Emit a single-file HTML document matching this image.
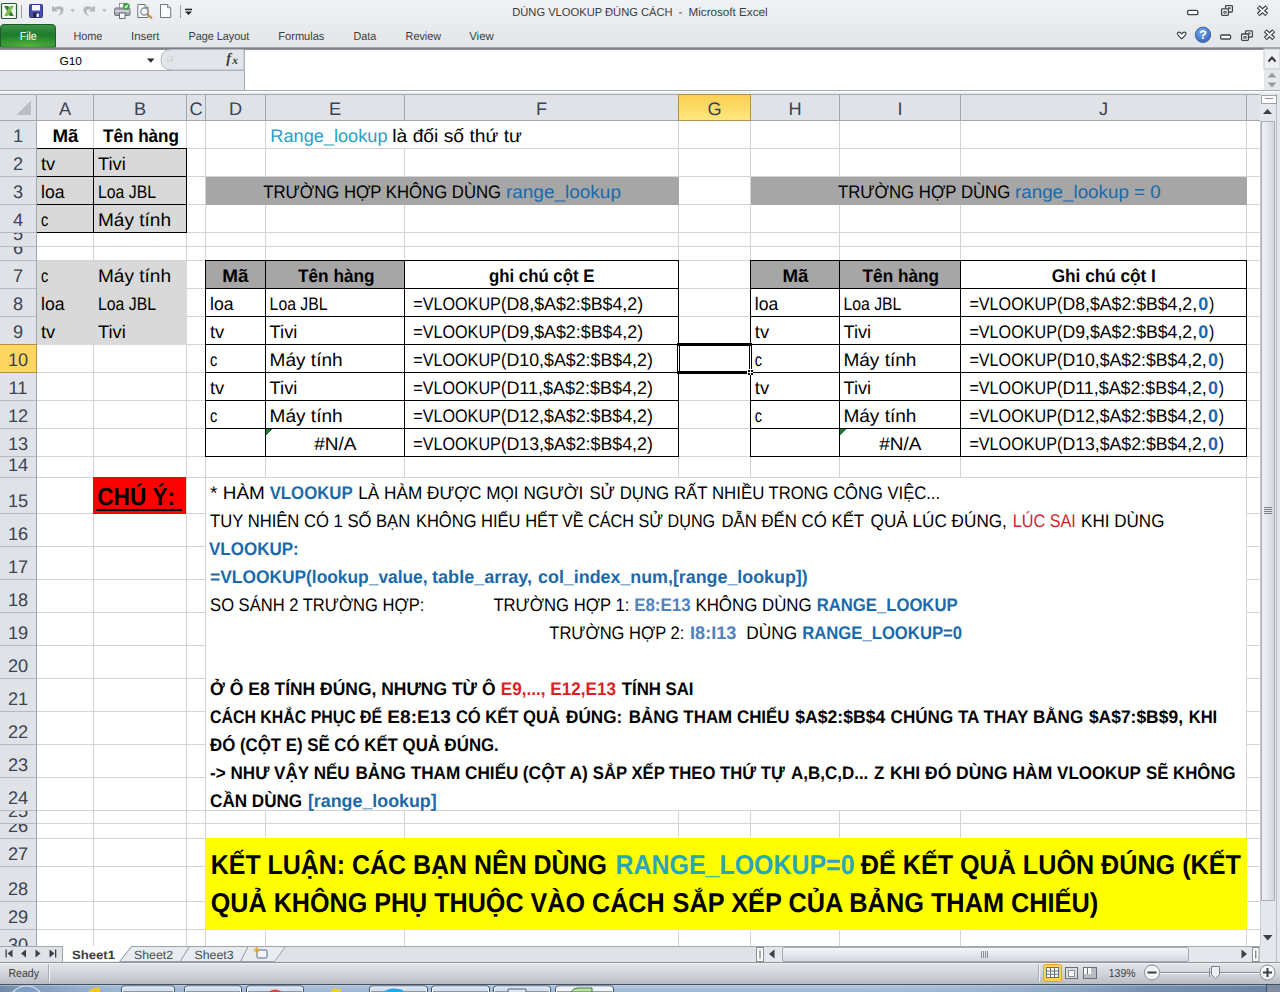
<!DOCTYPE html>
<html lang="vi">
<head>
<meta charset="utf-8">
<title>DÙNG VLOOKUP ĐÚNG CÁCH - Microsoft Excel</title>
<style>
html,body{margin:0;padding:0;background:#fff;}
body{width:1280px;height:992px;overflow:hidden;font-family:'Liberation Sans', sans-serif;}
svg{display:block;}
</style>
</head>
<body>
<svg width="1280" height="992" viewBox="0 0 1280 992" font-family="'Liberation Sans', sans-serif" text-rendering="geometricPrecision">
<defs>
<linearGradient id="gTitle" x1="0" y1="0" x2="0" y2="1"><stop offset="0" stop-color="#f1f2f4"/><stop offset="0.5" stop-color="#e9ebee"/><stop offset="1" stop-color="#e3e6ea"/></linearGradient>
<linearGradient id="gFile" x1="0" y1="0" x2="0" y2="1"><stop offset="0" stop-color="#3c9447"/><stop offset="0.45" stop-color="#1f7a2d"/><stop offset="1" stop-color="#3fa531"/></linearGradient>
<linearGradient id="gSelCol" x1="0" y1="0" x2="0" y2="1"><stop offset="0" stop-color="#fdd050"/><stop offset="1" stop-color="#ffe680"/></linearGradient>
<linearGradient id="gStatus" x1="0" y1="0" x2="0" y2="1"><stop offset="0" stop-color="#e4e6ea"/><stop offset="0.5" stop-color="#d3d6db"/><stop offset="1" stop-color="#b9bcc2"/></linearGradient>
<linearGradient id="gTask" x1="0" y1="0" x2="0" y2="1"><stop offset="0" stop-color="#b4c8e0"/><stop offset="1" stop-color="#9fb8d6"/></linearGradient>
<linearGradient id="gTaskX" x1="0" y1="0" x2="1" y2="0"><stop offset="0" stop-color="#5d7897" stop-opacity="0.75"/><stop offset="0.09" stop-color="#8aa5c6" stop-opacity="0.3"/><stop offset="0.5" stop-color="#a8c0dc" stop-opacity="0"/><stop offset="0.66" stop-color="#a8c0dc" stop-opacity="0"/><stop offset="0.9" stop-color="#66809f" stop-opacity="0.75"/><stop offset="1" stop-color="#5f7896" stop-opacity="0.85"/></linearGradient>
<linearGradient id="gThumbV" x1="0" y1="0" x2="1" y2="0"><stop offset="0" stop-color="#f3f4f7"/><stop offset="0.5" stop-color="#e3e6eb"/><stop offset="1" stop-color="#d2d6dd"/></linearGradient>
<linearGradient id="gThumbH" x1="0" y1="0" x2="0" y2="1"><stop offset="0" stop-color="#f5f6f8"/><stop offset="0.5" stop-color="#e4e7ec"/><stop offset="1" stop-color="#d3d7de"/></linearGradient>
<radialGradient id="gHelp" cx="0.4" cy="0.3" r="0.8"><stop offset="0" stop-color="#7fa8e6"/><stop offset="1" stop-color="#2f62b8"/></radialGradient>
<radialGradient id="gFileGlow" cx="0.5" cy="1.1" r="0.75"><stop offset="0" stop-color="#69c63c" stop-opacity="0.95"/><stop offset="1" stop-color="#2c8a33" stop-opacity="0"/></radialGradient>
</defs>
<g id="titlebar" shape-rendering="crispEdges">
<rect x="0" y="0" width="1280" height="47" fill="url(#gTitle)" />
<rect x="0" y="47" width="1280" height="1" fill="#a3a7ae" />
<rect x="0" y="48" width="1280" height="1" fill="#7b8089" />
<rect x="0" y="49" width="1280" height="1" fill="#8d9199" />
</g>
<g id="titletext">
<text x="512.2" y="16" font-size="11.6" fill="#3a3d42" textLength="160.5" lengthAdjust="spacingAndGlyphs">DÙNG VLOOKUP ĐÚNG CÁCH</text>
<text x="678.6" y="16" font-size="11.6" fill="#3a3d42">-</text>
<text x="688.5" y="16" font-size="11.6" fill="#3a3d42" textLength="79.1" lengthAdjust="spacingAndGlyphs">Microsoft Excel</text>
</g>
<g id="filetab">
<path d="M0.5 47 V28 Q0.5 24.5 4 24.5 H52 Q55.5 24.5 55.5 28 V47 Z" fill="url(#gFile)" stroke="#1d5b29" stroke-width="1"/>
<path d="M1.5 47 V28.5 Q1.5 25.5 4.5 25.5 H51.5 Q54.5 25.5 54.5 28.5 V47 Z" fill="url(#gFileGlow)"/>
<text x="19.7" y="40" font-size="11.6" fill="#ffffff" textLength="17" lengthAdjust="spacingAndGlyphs">File</text>
</g>
<g id="ribbontabs" fill="#3a3d42">
<text x="73.4" y="40" font-size="11.6" fill="#3a3d42" textLength="29.0" lengthAdjust="spacingAndGlyphs">Home</text>
<text x="131" y="40" font-size="11.6" fill="#3a3d42" textLength="28.4" lengthAdjust="spacingAndGlyphs">Insert</text>
<text x="188.4" y="40" font-size="11.6" fill="#3a3d42" textLength="61.0" lengthAdjust="spacingAndGlyphs">Page Layout</text>
<text x="278.3" y="40" font-size="11.6" fill="#3a3d42" textLength="46.1" lengthAdjust="spacingAndGlyphs">Formulas</text>
<text x="353.6" y="40" font-size="11.6" fill="#3a3d42" textLength="22.7" lengthAdjust="spacingAndGlyphs">Data</text>
<text x="405.6" y="40" font-size="11.6" fill="#3a3d42" textLength="35.4" lengthAdjust="spacingAndGlyphs">Review</text>
<text x="469.2" y="40" font-size="11.6" fill="#3a3d42" textLength="24.6" lengthAdjust="spacingAndGlyphs">View</text>
</g>
<g id="formulabar" shape-rendering="crispEdges">
<rect x="0" y="50" width="1280" height="40" fill="#ffffff" />
<rect x="0" y="71" width="244" height="19" fill="#e2e5ea" />
<rect x="0" y="70" width="244" height="1" fill="#a9adb5" />
<rect x="244" y="50" width="1" height="40" fill="#a9adb5" />
<rect x="0" y="90" width="1280" height="1" fill="#a3a8b0" />
<rect x="0" y="91" width="1280" height="1" fill="#ffffff" />
<rect x="0" y="92" width="1280" height="2" fill="#eceef1" />
</g>
<path d="M244 49.5 H172 Q161 49.5 161 60 Q161 70 172 70 H244 Z" fill="#e2e5ea" stroke="#b4b8bf" stroke-width="1"/>
<circle cx="170" cy="59" r="3.3" fill="#d2d5da"/>
<circle cx="169.3" cy="58.2" r="1.6" fill="#e9ebee"/>
<text x="59.4" y="64.5" font-size="11.4" fill="#000" textLength="22.6" lengthAdjust="spacingAndGlyphs">G10</text>
<path d="M147 58.5 h7.5 l-3.75 4.2 z" fill="#2b2b2b"/>
<text x="226.3" y="63.2" font-size="14.5" fill="#3a3d42" font-weight="bold" font-family="'Liberation Serif', serif" style="font-style:italic">f</text>
<text x="232.2" y="64.2" font-size="11.5" fill="#3a3d42" font-weight="bold" font-family="'Liberation Serif', serif" style="font-style:italic">x</text>
<g id="fbscroll">
<rect x="1264" y="49" width="16" height="41" fill="#e6e8ec" />
<rect x="1264" y="49" width="16" height="20" fill="#eff0f3" stroke="#c5c8ce" stroke-width="1"/>
<path d="M1268.5 61.5 l3.5 -4 l3.5 4" fill="none" stroke="#333" stroke-width="2"/>
<path d="M1267.5 77.5 h9 l-4.5 -5 z" fill="#9a9da3"/>
<path d="M1267.5 82.5 h9 l-4.5 5 z" fill="#9a9da3"/>
</g>
<g id="grid" shape-rendering="crispEdges">
<rect x="0" y="94" width="1260" height="852" fill="#ffffff" />
<rect x="37" y="148" width="1223" height="1" fill="#d4d4d4" />
<rect x="37" y="176" width="1223" height="1" fill="#d4d4d4" />
<rect x="37" y="204" width="1223" height="1" fill="#d4d4d4" />
<rect x="37" y="232" width="1223" height="1" fill="#d4d4d4" />
<rect x="37" y="246" width="1223" height="1" fill="#d4d4d4" />
<rect x="37" y="260" width="1223" height="1" fill="#d4d4d4" />
<rect x="37" y="288" width="1223" height="1" fill="#d4d4d4" />
<rect x="37" y="316" width="1223" height="1" fill="#d4d4d4" />
<rect x="37" y="344" width="1223" height="1" fill="#d4d4d4" />
<rect x="37" y="372" width="1223" height="1" fill="#d4d4d4" />
<rect x="37" y="400" width="1223" height="1" fill="#d4d4d4" />
<rect x="37" y="428" width="1223" height="1" fill="#d4d4d4" />
<rect x="37" y="456" width="1223" height="1" fill="#d4d4d4" />
<rect x="37" y="477" width="1223" height="1" fill="#d4d4d4" />
<rect x="37" y="513" width="1223" height="1" fill="#d4d4d4" />
<rect x="37" y="546" width="1223" height="1" fill="#d4d4d4" />
<rect x="37" y="579" width="1223" height="1" fill="#d4d4d4" />
<rect x="37" y="612" width="1223" height="1" fill="#d4d4d4" />
<rect x="37" y="645" width="1223" height="1" fill="#d4d4d4" />
<rect x="37" y="678" width="1223" height="1" fill="#d4d4d4" />
<rect x="37" y="711" width="1223" height="1" fill="#d4d4d4" />
<rect x="37" y="744" width="1223" height="1" fill="#d4d4d4" />
<rect x="37" y="777" width="1223" height="1" fill="#d4d4d4" />
<rect x="37" y="810" width="1223" height="1" fill="#d4d4d4" />
<rect x="37" y="823" width="1223" height="1" fill="#d4d4d4" />
<rect x="37" y="838" width="1223" height="1" fill="#d4d4d4" />
<rect x="37" y="866" width="1223" height="1" fill="#d4d4d4" />
<rect x="37" y="901" width="1223" height="1" fill="#d4d4d4" />
<rect x="37" y="929" width="1223" height="1" fill="#d4d4d4" />
<rect x="93" y="121" width="1" height="825" fill="#d4d4d4" />
<rect x="186" y="121" width="1" height="825" fill="#d4d4d4" />
<rect x="205" y="121" width="1" height="825" fill="#d4d4d4" />
<rect x="265" y="121" width="1" height="825" fill="#d4d4d4" />
<rect x="404" y="121" width="1" height="825" fill="#d4d4d4" />
<rect x="678" y="121" width="1" height="825" fill="#d4d4d4" />
<rect x="750" y="121" width="1" height="825" fill="#d4d4d4" />
<rect x="839" y="121" width="1" height="825" fill="#d4d4d4" />
<rect x="960" y="121" width="1" height="825" fill="#d4d4d4" />
<rect x="1246" y="121" width="1" height="825" fill="#d4d4d4" />
<rect x="37" y="149" width="150" height="84" fill="#d9d9d9" />
<rect x="37" y="261" width="150" height="84" fill="#d9d9d9" />
<rect x="206" y="177" width="473" height="28" fill="#a6a6a6" />
<rect x="751" y="177" width="496" height="28" fill="#a6a6a6" />
<rect x="404" y="121" width="1" height="27" fill="#ffffff" />
<rect x="206" y="261" width="199" height="28" fill="#a6a6a6" />
<rect x="751" y="261" width="210" height="28" fill="#a6a6a6" />
<rect x="206" y="478" width="1040" height="332" fill="#ffffff" />
<rect x="205" y="838" width="1042" height="92" fill="#ffff00" />
<rect x="93" y="477" width="93" height="37" fill="#ff0000" />
<rect x="37" y="148" width="150" height="1" fill="#000000" />
<rect x="37" y="176" width="150" height="1" fill="#000000" />
<rect x="37" y="204" width="150" height="1" fill="#000000" />
<rect x="37" y="232" width="150" height="1" fill="#000000" />
<rect x="93" y="148" width="1" height="85" fill="#000000" />
<rect x="186" y="148" width="1" height="85" fill="#000000" />
<rect x="205" y="260" width="474" height="1" fill="#000000" />
<rect x="205" y="288" width="474" height="1" fill="#000000" />
<rect x="205" y="316" width="474" height="1" fill="#000000" />
<rect x="205" y="344" width="474" height="1" fill="#000000" />
<rect x="205" y="372" width="474" height="1" fill="#000000" />
<rect x="205" y="400" width="474" height="1" fill="#000000" />
<rect x="205" y="428" width="474" height="1" fill="#000000" />
<rect x="205" y="456" width="474" height="1" fill="#000000" />
<rect x="205" y="260" width="1" height="197" fill="#000000" />
<rect x="265" y="260" width="1" height="197" fill="#000000" />
<rect x="404" y="260" width="1" height="197" fill="#000000" />
<rect x="678" y="260" width="1" height="197" fill="#000000" />
<rect x="750" y="260" width="497" height="1" fill="#000000" />
<rect x="750" y="288" width="497" height="1" fill="#000000" />
<rect x="750" y="316" width="497" height="1" fill="#000000" />
<rect x="750" y="344" width="497" height="1" fill="#000000" />
<rect x="750" y="372" width="497" height="1" fill="#000000" />
<rect x="750" y="400" width="497" height="1" fill="#000000" />
<rect x="750" y="428" width="497" height="1" fill="#000000" />
<rect x="750" y="456" width="497" height="1" fill="#000000" />
<rect x="750" y="260" width="1" height="197" fill="#000000" />
<rect x="839" y="260" width="1" height="197" fill="#000000" />
<rect x="960" y="260" width="1" height="197" fill="#000000" />
<rect x="1246" y="260" width="1" height="197" fill="#000000" />
<path d="M266 429 h6 l-6 6 z" fill="#1e7a3c"/>
<path d="M840 429 h6 l-6 6 z" fill="#1e7a3c"/>
<path d="M677 343 H752 V374 H677 Z M680 346 V371 H749 V346 Z" fill="#000" fill-rule="evenodd"/>
<rect x="678" y="346" width="1" height="25" fill="#ffffff" />
<rect x="750" y="346" width="1" height="23" fill="#ffffff" />
<rect x="747" y="369" width="6" height="6" fill="#ffffff" />
<rect x="748" y="370" width="5" height="5" fill="#000000" />
<rect x="750" y="370" width="1" height="5" fill="#ffffff" />
<rect x="748" y="372" width="5" height="1" fill="#ffffff" />
<rect x="0" y="94" width="1260" height="27" fill="#dfe3e8" />
<rect x="0" y="94" width="1260" height="1" fill="#a3a8b0" />
<rect x="0" y="120" width="1260" height="1" fill="#a3a8b0" />
<rect x="679" y="95" width="71" height="25" fill="url(#gSelCol)" />
<rect x="36" y="95" width="1" height="26" fill="#a3a8b0" />
<rect x="93" y="95" width="1" height="26" fill="#a3a8b0" />
<rect x="186" y="95" width="1" height="26" fill="#a3a8b0" />
<rect x="205" y="95" width="1" height="26" fill="#a3a8b0" />
<rect x="265" y="95" width="1" height="26" fill="#a3a8b0" />
<rect x="404" y="95" width="1" height="26" fill="#a3a8b0" />
<rect x="678" y="95" width="1" height="26" fill="#a3a8b0" />
<rect x="750" y="95" width="1" height="26" fill="#a3a8b0" />
<rect x="839" y="95" width="1" height="26" fill="#a3a8b0" />
<rect x="960" y="95" width="1" height="26" fill="#a3a8b0" />
<rect x="1246" y="95" width="1" height="26" fill="#a3a8b0" />
<rect x="678" y="120" width="73" height="1" fill="#b39241" />
<rect x="678" y="94" width="73" height="1" fill="#b39241" />
<rect x="678" y="94" width="1" height="27" fill="#b39241" />
<rect x="750" y="94" width="1" height="27" fill="#b39241" />
<path d="M31 100 V115 H16 Z" fill="#b9bdc4"/>
<rect x="0" y="121" width="36" height="825" fill="#dfe3e8" />
<rect x="36" y="121" width="1" height="825" fill="#a3a8b0" />
<rect x="0" y="148" width="36" height="1" fill="#b4b8bf" />
<rect x="0" y="176" width="36" height="1" fill="#b4b8bf" />
<rect x="0" y="204" width="36" height="1" fill="#b4b8bf" />
<rect x="0" y="232" width="36" height="1" fill="#b4b8bf" />
<rect x="0" y="246" width="36" height="1" fill="#b4b8bf" />
<rect x="0" y="260" width="36" height="1" fill="#b4b8bf" />
<rect x="0" y="288" width="36" height="1" fill="#b4b8bf" />
<rect x="0" y="316" width="36" height="1" fill="#b4b8bf" />
<rect x="0" y="344" width="36" height="1" fill="#b4b8bf" />
<rect x="0" y="372" width="36" height="1" fill="#b4b8bf" />
<rect x="0" y="400" width="36" height="1" fill="#b4b8bf" />
<rect x="0" y="428" width="36" height="1" fill="#b4b8bf" />
<rect x="0" y="456" width="36" height="1" fill="#b4b8bf" />
<rect x="0" y="477" width="36" height="1" fill="#b4b8bf" />
<rect x="0" y="513" width="36" height="1" fill="#b4b8bf" />
<rect x="0" y="546" width="36" height="1" fill="#b4b8bf" />
<rect x="0" y="579" width="36" height="1" fill="#b4b8bf" />
<rect x="0" y="612" width="36" height="1" fill="#b4b8bf" />
<rect x="0" y="645" width="36" height="1" fill="#b4b8bf" />
<rect x="0" y="678" width="36" height="1" fill="#b4b8bf" />
<rect x="0" y="711" width="36" height="1" fill="#b4b8bf" />
<rect x="0" y="744" width="36" height="1" fill="#b4b8bf" />
<rect x="0" y="777" width="36" height="1" fill="#b4b8bf" />
<rect x="0" y="810" width="36" height="1" fill="#b4b8bf" />
<rect x="0" y="823" width="36" height="1" fill="#b4b8bf" />
<rect x="0" y="838" width="36" height="1" fill="#b4b8bf" />
<rect x="0" y="866" width="36" height="1" fill="#b4b8bf" />
<rect x="0" y="901" width="36" height="1" fill="#b4b8bf" />
<rect x="0" y="929" width="36" height="1" fill="#b4b8bf" />
<rect x="0" y="345" width="36" height="27" fill="#ffd65f" />
<rect x="0" y="372" width="37" height="1" fill="#b39241" />
<rect x="0" y="344" width="37" height="1" fill="#b39241" />
<rect x="36" y="344" width="1" height="29" fill="#b39241" />
</g>
<g id="hdrtext">
<text x="65.0" y="114.5" font-size="18.2" fill="#3c4250" text-anchor="middle">A</text>
<text x="140.0" y="114.5" font-size="18.2" fill="#3c4250" text-anchor="middle">B</text>
<text x="196.0" y="114.5" font-size="18.2" fill="#3c4250" text-anchor="middle">C</text>
<text x="235.5" y="114.5" font-size="18.2" fill="#3c4250" text-anchor="middle">D</text>
<text x="335.0" y="114.5" font-size="18.2" fill="#3c4250" text-anchor="middle">E</text>
<text x="541.5" y="114.5" font-size="18.2" fill="#3c4250" text-anchor="middle">F</text>
<text x="714.5" y="114.5" font-size="18.2" fill="#3c4250" text-anchor="middle">G</text>
<text x="795.0" y="114.5" font-size="18.2" fill="#3c4250" text-anchor="middle">H</text>
<text x="900.0" y="114.5" font-size="18.2" fill="#3c4250" text-anchor="middle">I</text>
<text x="1103.5" y="114.5" font-size="18.2" fill="#3c4250" text-anchor="middle">J</text>
<clipPath id="rc1"><rect x="0" y="121" width="36" height="27"/></clipPath>
<g clip-path="url(#rc1)">
<text x="18" y="141.5" font-size="18.2" fill="#3c4250" text-anchor="middle">1</text>
</g>
<clipPath id="rc2"><rect x="0" y="149" width="36" height="27"/></clipPath>
<g clip-path="url(#rc2)">
<text x="18" y="169.5" font-size="18.2" fill="#3c4250" text-anchor="middle">2</text>
</g>
<clipPath id="rc3"><rect x="0" y="177" width="36" height="27"/></clipPath>
<g clip-path="url(#rc3)">
<text x="18" y="197.5" font-size="18.2" fill="#3c4250" text-anchor="middle">3</text>
</g>
<clipPath id="rc4"><rect x="0" y="205" width="36" height="27"/></clipPath>
<g clip-path="url(#rc4)">
<text x="18" y="225.5" font-size="18.2" fill="#3c4250" text-anchor="middle">4</text>
</g>
<clipPath id="rc5"><rect x="0" y="233" width="36" height="13"/></clipPath>
<g clip-path="url(#rc5)">
<text x="18" y="239.5" font-size="18.2" fill="#3c4250" text-anchor="middle">5</text>
</g>
<clipPath id="rc6"><rect x="0" y="247" width="36" height="13"/></clipPath>
<g clip-path="url(#rc6)">
<text x="18" y="253.5" font-size="18.2" fill="#3c4250" text-anchor="middle">6</text>
</g>
<clipPath id="rc7"><rect x="0" y="261" width="36" height="27"/></clipPath>
<g clip-path="url(#rc7)">
<text x="18" y="281.5" font-size="18.2" fill="#3c4250" text-anchor="middle">7</text>
</g>
<clipPath id="rc8"><rect x="0" y="289" width="36" height="27"/></clipPath>
<g clip-path="url(#rc8)">
<text x="18" y="309.5" font-size="18.2" fill="#3c4250" text-anchor="middle">8</text>
</g>
<clipPath id="rc9"><rect x="0" y="317" width="36" height="27"/></clipPath>
<g clip-path="url(#rc9)">
<text x="18" y="337.5" font-size="18.2" fill="#3c4250" text-anchor="middle">9</text>
</g>
<clipPath id="rc10"><rect x="0" y="345" width="36" height="27"/></clipPath>
<g clip-path="url(#rc10)">
<text x="18" y="365.5" font-size="18.2" fill="#3c4250" text-anchor="middle">10</text>
</g>
<clipPath id="rc11"><rect x="0" y="373" width="36" height="27"/></clipPath>
<g clip-path="url(#rc11)">
<text x="18" y="393.5" font-size="18.2" fill="#3c4250" text-anchor="middle">11</text>
</g>
<clipPath id="rc12"><rect x="0" y="401" width="36" height="27"/></clipPath>
<g clip-path="url(#rc12)">
<text x="18" y="421.5" font-size="18.2" fill="#3c4250" text-anchor="middle">12</text>
</g>
<clipPath id="rc13"><rect x="0" y="429" width="36" height="27"/></clipPath>
<g clip-path="url(#rc13)">
<text x="18" y="449.5" font-size="18.2" fill="#3c4250" text-anchor="middle">13</text>
</g>
<clipPath id="rc14"><rect x="0" y="457" width="36" height="20"/></clipPath>
<g clip-path="url(#rc14)">
<text x="18" y="470.5" font-size="18.2" fill="#3c4250" text-anchor="middle">14</text>
</g>
<clipPath id="rc15"><rect x="0" y="478" width="36" height="35"/></clipPath>
<g clip-path="url(#rc15)">
<text x="18" y="506.5" font-size="18.2" fill="#3c4250" text-anchor="middle">15</text>
</g>
<clipPath id="rc16"><rect x="0" y="514" width="36" height="32"/></clipPath>
<g clip-path="url(#rc16)">
<text x="18" y="539.5" font-size="18.2" fill="#3c4250" text-anchor="middle">16</text>
</g>
<clipPath id="rc17"><rect x="0" y="547" width="36" height="32"/></clipPath>
<g clip-path="url(#rc17)">
<text x="18" y="572.5" font-size="18.2" fill="#3c4250" text-anchor="middle">17</text>
</g>
<clipPath id="rc18"><rect x="0" y="580" width="36" height="32"/></clipPath>
<g clip-path="url(#rc18)">
<text x="18" y="605.5" font-size="18.2" fill="#3c4250" text-anchor="middle">18</text>
</g>
<clipPath id="rc19"><rect x="0" y="613" width="36" height="32"/></clipPath>
<g clip-path="url(#rc19)">
<text x="18" y="638.5" font-size="18.2" fill="#3c4250" text-anchor="middle">19</text>
</g>
<clipPath id="rc20"><rect x="0" y="646" width="36" height="32"/></clipPath>
<g clip-path="url(#rc20)">
<text x="18" y="671.5" font-size="18.2" fill="#3c4250" text-anchor="middle">20</text>
</g>
<clipPath id="rc21"><rect x="0" y="679" width="36" height="32"/></clipPath>
<g clip-path="url(#rc21)">
<text x="18" y="704.5" font-size="18.2" fill="#3c4250" text-anchor="middle">21</text>
</g>
<clipPath id="rc22"><rect x="0" y="712" width="36" height="32"/></clipPath>
<g clip-path="url(#rc22)">
<text x="18" y="737.5" font-size="18.2" fill="#3c4250" text-anchor="middle">22</text>
</g>
<clipPath id="rc23"><rect x="0" y="745" width="36" height="32"/></clipPath>
<g clip-path="url(#rc23)">
<text x="18" y="770.5" font-size="18.2" fill="#3c4250" text-anchor="middle">23</text>
</g>
<clipPath id="rc24"><rect x="0" y="778" width="36" height="32"/></clipPath>
<g clip-path="url(#rc24)">
<text x="18" y="803.5" font-size="18.2" fill="#3c4250" text-anchor="middle">24</text>
</g>
<clipPath id="rc25"><rect x="0" y="811" width="36" height="12"/></clipPath>
<g clip-path="url(#rc25)">
<text x="18" y="816.5" font-size="18.2" fill="#3c4250" text-anchor="middle">25</text>
</g>
<clipPath id="rc26"><rect x="0" y="824" width="36" height="14"/></clipPath>
<g clip-path="url(#rc26)">
<text x="18" y="831.5" font-size="18.2" fill="#3c4250" text-anchor="middle">26</text>
</g>
<clipPath id="rc27"><rect x="0" y="839" width="36" height="27"/></clipPath>
<g clip-path="url(#rc27)">
<text x="18" y="859.5" font-size="18.2" fill="#3c4250" text-anchor="middle">27</text>
</g>
<clipPath id="rc28"><rect x="0" y="867" width="36" height="34"/></clipPath>
<g clip-path="url(#rc28)">
<text x="18" y="894.5" font-size="18.2" fill="#3c4250" text-anchor="middle">28</text>
</g>
<clipPath id="rc29"><rect x="0" y="902" width="36" height="27"/></clipPath>
<g clip-path="url(#rc29)">
<text x="18" y="922.5" font-size="18.2" fill="#3c4250" text-anchor="middle">29</text>
</g>
<clipPath id="rc30"><rect x="0" y="930" width="36" height="16"/></clipPath>
<g clip-path="url(#rc30)">
<text x="18" y="950.5" font-size="18.2" fill="#3c4250" text-anchor="middle">30</text>
</g>
</g>
<g id="celltext">
<text x="52.5" y="141.5" font-size="18.2" fill="#000" font-weight="bold" textLength="26" lengthAdjust="spacingAndGlyphs">Mã</text>
<text x="103" y="141.5" font-size="18.2" fill="#000" font-weight="bold" textLength="76" lengthAdjust="spacingAndGlyphs">Tên hàng</text>
<text x="41" y="169.5" font-size="18.2" fill="#000" textLength="14.3" lengthAdjust="spacingAndGlyphs">tv</text>
<text x="98" y="169.5" font-size="18.2" fill="#000" textLength="27.8" lengthAdjust="spacingAndGlyphs">Tivi</text>
<text x="41" y="197.5" font-size="18.2" fill="#000" textLength="23.5" lengthAdjust="spacingAndGlyphs">loa</text>
<text x="98" y="197.5" font-size="18.2" fill="#000" textLength="58" lengthAdjust="spacingAndGlyphs">Loa JBL</text>
<text x="41" y="225.5" font-size="18.2" fill="#000" textLength="7.3" lengthAdjust="spacingAndGlyphs">c</text>
<text x="98" y="225.5" font-size="18.2" fill="#000" textLength="73" lengthAdjust="spacingAndGlyphs">Máy tính</text>
<text x="41" y="281.5" font-size="18.2" fill="#000" textLength="7.3" lengthAdjust="spacingAndGlyphs">c</text>
<text x="98" y="281.5" font-size="18.2" fill="#000" textLength="73" lengthAdjust="spacingAndGlyphs">Máy tính</text>
<text x="41" y="309.5" font-size="18.2" fill="#000" textLength="23.5" lengthAdjust="spacingAndGlyphs">loa</text>
<text x="98" y="309.5" font-size="18.2" fill="#000" textLength="58" lengthAdjust="spacingAndGlyphs">Loa JBL</text>
<text x="41" y="337.5" font-size="18.2" fill="#000" textLength="14.3" lengthAdjust="spacingAndGlyphs">tv</text>
<text x="98" y="337.5" font-size="18.2" fill="#000" textLength="27.8" lengthAdjust="spacingAndGlyphs">Tivi</text>
<text x="270.3" y="141.5" font-size="18.2" fill="#2c9fc2" textLength="117.2" lengthAdjust="spacingAndGlyphs">Range_lookup</text>
<text x="392.3" y="141.5" font-size="18.2" fill="#000" textLength="129.7" lengthAdjust="spacingAndGlyphs">là đối số thứ tư</text>
<text x="263.3" y="197.5" font-size="18.2" fill="#000" textLength="237.8" lengthAdjust="spacingAndGlyphs">TRƯỜNG HỢP KHÔNG DÙNG</text>
<text x="505.9" y="197.5" font-size="18.2" fill="#1a6aab" textLength="115.1" lengthAdjust="spacingAndGlyphs">range_lookup</text>
<text x="837.9" y="197.5" font-size="18.2" fill="#000" textLength="172.4" lengthAdjust="spacingAndGlyphs">TRƯỜNG HỢP DÙNG</text>
<text x="1015" y="197.5" font-size="18.2" fill="#1a6aab" textLength="145.7" lengthAdjust="spacingAndGlyphs">range_lookup = 0</text>
<text x="222.3" y="281.5" font-size="18.2" fill="#000" font-weight="bold" textLength="26.2" lengthAdjust="spacingAndGlyphs">Mã</text>
<text x="298" y="281.5" font-size="18.2" fill="#000" font-weight="bold" textLength="76.5" lengthAdjust="spacingAndGlyphs">Tên hàng</text>
<text x="489" y="281.5" font-size="18.2" fill="#000" font-weight="bold" textLength="105.4" lengthAdjust="spacingAndGlyphs">ghi chú cột E</text>
<text x="782.5" y="281.5" font-size="18.2" fill="#000" font-weight="bold" textLength="26" lengthAdjust="spacingAndGlyphs">Mã</text>
<text x="862.6" y="281.5" font-size="18.2" fill="#000" font-weight="bold" textLength="76.4" lengthAdjust="spacingAndGlyphs">Tên hàng</text>
<text x="1051.7" y="281.5" font-size="18.2" fill="#000" font-weight="bold" textLength="104.2" lengthAdjust="spacingAndGlyphs">Ghi chú cột I</text>
<text x="210" y="309.5" font-size="18.2" fill="#000" textLength="23.5" lengthAdjust="spacingAndGlyphs">loa</text>
<text x="269.6" y="309.5" font-size="18.2" fill="#000" textLength="58" lengthAdjust="spacingAndGlyphs">Loa JBL</text>
<text x="754.8" y="309.5" font-size="18.2" fill="#000" textLength="23.5" lengthAdjust="spacingAndGlyphs">loa</text>
<text x="843.4" y="309.5" font-size="18.2" fill="#000" textLength="58" lengthAdjust="spacingAndGlyphs">Loa JBL</text>
<text x="210" y="337.5" font-size="18.2" fill="#000" textLength="14.3" lengthAdjust="spacingAndGlyphs">tv</text>
<text x="269.6" y="337.5" font-size="18.2" fill="#000" textLength="27.8" lengthAdjust="spacingAndGlyphs">Tivi</text>
<text x="754.8" y="337.5" font-size="18.2" fill="#000" textLength="14.3" lengthAdjust="spacingAndGlyphs">tv</text>
<text x="843.4" y="337.5" font-size="18.2" fill="#000" textLength="27.8" lengthAdjust="spacingAndGlyphs">Tivi</text>
<text x="210" y="365.5" font-size="18.2" fill="#000" textLength="7.3" lengthAdjust="spacingAndGlyphs">c</text>
<text x="269.6" y="365.5" font-size="18.2" fill="#000" textLength="73" lengthAdjust="spacingAndGlyphs">Máy tính</text>
<text x="754.8" y="365.5" font-size="18.2" fill="#000" textLength="7.3" lengthAdjust="spacingAndGlyphs">c</text>
<text x="843.4" y="365.5" font-size="18.2" fill="#000" textLength="73" lengthAdjust="spacingAndGlyphs">Máy tính</text>
<text x="210" y="393.5" font-size="18.2" fill="#000" textLength="14.3" lengthAdjust="spacingAndGlyphs">tv</text>
<text x="269.6" y="393.5" font-size="18.2" fill="#000" textLength="27.8" lengthAdjust="spacingAndGlyphs">Tivi</text>
<text x="754.8" y="393.5" font-size="18.2" fill="#000" textLength="14.3" lengthAdjust="spacingAndGlyphs">tv</text>
<text x="843.4" y="393.5" font-size="18.2" fill="#000" textLength="27.8" lengthAdjust="spacingAndGlyphs">Tivi</text>
<text x="210" y="421.5" font-size="18.2" fill="#000" textLength="7.3" lengthAdjust="spacingAndGlyphs">c</text>
<text x="269.6" y="421.5" font-size="18.2" fill="#000" textLength="73" lengthAdjust="spacingAndGlyphs">Máy tính</text>
<text x="754.8" y="421.5" font-size="18.2" fill="#000" textLength="7.3" lengthAdjust="spacingAndGlyphs">c</text>
<text x="843.4" y="421.5" font-size="18.2" fill="#000" textLength="73" lengthAdjust="spacingAndGlyphs">Máy tính</text>
<text x="314.2" y="449.5" font-size="18.2" fill="#000" textLength="42.2" lengthAdjust="spacingAndGlyphs">#N/A</text>
<text x="879.1999999999999" y="449.5" font-size="18.2" fill="#000" textLength="42.2" lengthAdjust="spacingAndGlyphs">#N/A</text>
<text x="97.3" y="505.4" font-size="24.6" fill="#000" font-weight="bold" textLength="77.7" lengthAdjust="spacingAndGlyphs">CHÚ Ý:</text>
<rect x="96" y="509" width="86" height="2" fill="#000" shape-rendering="crispEdges"/>
<text x="413.2" y="309.5" font-size="18.2" fill="#000" textLength="93.1" lengthAdjust="spacingAndGlyphs">=VLOOKUP(</text>
<text x="506.4" y="309.5" font-size="18.2" fill="#000" textLength="136.8" lengthAdjust="spacingAndGlyphs">D8,$A$2:$B$4,2)</text>
<text x="969.4" y="309.5" font-size="18.2" fill="#000" textLength="92.9" lengthAdjust="spacingAndGlyphs">=VLOOKUP(</text>
<text x="1062.4" y="309.5" font-size="18.2" fill="#000" textLength="134.7" lengthAdjust="spacingAndGlyphs">D8,$A$2:$B$4,2,</text>
<text x="1198.2" y="309.5" font-size="18.2" fill="#1a6aab" font-weight="bold" textLength="10.0" lengthAdjust="spacingAndGlyphs">0</text>
<text x="1209.0" y="309.5" font-size="18.2" fill="#000" textLength="5.3" lengthAdjust="spacingAndGlyphs">)</text>
<text x="413.2" y="337.5" font-size="18.2" fill="#000" textLength="93.1" lengthAdjust="spacingAndGlyphs">=VLOOKUP(</text>
<text x="506.4" y="337.5" font-size="18.2" fill="#000" textLength="136.8" lengthAdjust="spacingAndGlyphs">D9,$A$2:$B$4,2)</text>
<text x="969.4" y="337.5" font-size="18.2" fill="#000" textLength="92.9" lengthAdjust="spacingAndGlyphs">=VLOOKUP(</text>
<text x="1062.4" y="337.5" font-size="18.2" fill="#000" textLength="134.7" lengthAdjust="spacingAndGlyphs">D9,$A$2:$B$4,2,</text>
<text x="1198.2" y="337.5" font-size="18.2" fill="#1a6aab" font-weight="bold" textLength="10.0" lengthAdjust="spacingAndGlyphs">0</text>
<text x="1209.0" y="337.5" font-size="18.2" fill="#000" textLength="5.3" lengthAdjust="spacingAndGlyphs">)</text>
<text x="413.2" y="365.5" font-size="18.2" fill="#000" textLength="93.1" lengthAdjust="spacingAndGlyphs">=VLOOKUP(</text>
<text x="506.4" y="365.5" font-size="18.2" fill="#000" textLength="146.5" lengthAdjust="spacingAndGlyphs">D10,$A$2:$B$4,2)</text>
<text x="969.4" y="365.5" font-size="18.2" fill="#000" textLength="92.9" lengthAdjust="spacingAndGlyphs">=VLOOKUP(</text>
<text x="1062.4" y="365.5" font-size="18.2" fill="#000" textLength="144.4" lengthAdjust="spacingAndGlyphs">D10,$A$2:$B$4,2,</text>
<text x="1207.9" y="365.5" font-size="18.2" fill="#1a6aab" font-weight="bold" textLength="10.0" lengthAdjust="spacingAndGlyphs">0</text>
<text x="1218.7" y="365.5" font-size="18.2" fill="#000" textLength="5.3" lengthAdjust="spacingAndGlyphs">)</text>
<text x="413.2" y="393.5" font-size="18.2" fill="#000" textLength="93.1" lengthAdjust="spacingAndGlyphs">=VLOOKUP(</text>
<text x="506.4" y="393.5" font-size="18.2" fill="#000" textLength="146.5" lengthAdjust="spacingAndGlyphs">D11,$A$2:$B$4,2)</text>
<text x="969.4" y="393.5" font-size="18.2" fill="#000" textLength="92.9" lengthAdjust="spacingAndGlyphs">=VLOOKUP(</text>
<text x="1062.4" y="393.5" font-size="18.2" fill="#000" textLength="144.4" lengthAdjust="spacingAndGlyphs">D11,$A$2:$B$4,2,</text>
<text x="1207.9" y="393.5" font-size="18.2" fill="#1a6aab" font-weight="bold" textLength="10.0" lengthAdjust="spacingAndGlyphs">0</text>
<text x="1218.7" y="393.5" font-size="18.2" fill="#000" textLength="5.3" lengthAdjust="spacingAndGlyphs">)</text>
<text x="413.2" y="421.5" font-size="18.2" fill="#000" textLength="93.1" lengthAdjust="spacingAndGlyphs">=VLOOKUP(</text>
<text x="506.4" y="421.5" font-size="18.2" fill="#000" textLength="146.5" lengthAdjust="spacingAndGlyphs">D12,$A$2:$B$4,2)</text>
<text x="969.4" y="421.5" font-size="18.2" fill="#000" textLength="92.9" lengthAdjust="spacingAndGlyphs">=VLOOKUP(</text>
<text x="1062.4" y="421.5" font-size="18.2" fill="#000" textLength="144.4" lengthAdjust="spacingAndGlyphs">D12,$A$2:$B$4,2,</text>
<text x="1207.9" y="421.5" font-size="18.2" fill="#1a6aab" font-weight="bold" textLength="10.0" lengthAdjust="spacingAndGlyphs">0</text>
<text x="1218.7" y="421.5" font-size="18.2" fill="#000" textLength="5.3" lengthAdjust="spacingAndGlyphs">)</text>
<text x="413.2" y="449.5" font-size="18.2" fill="#000" textLength="93.1" lengthAdjust="spacingAndGlyphs">=VLOOKUP(</text>
<text x="506.4" y="449.5" font-size="18.2" fill="#000" textLength="146.5" lengthAdjust="spacingAndGlyphs">D13,$A$2:$B$4,2)</text>
<text x="969.4" y="449.5" font-size="18.2" fill="#000" textLength="92.9" lengthAdjust="spacingAndGlyphs">=VLOOKUP(</text>
<text x="1062.4" y="449.5" font-size="18.2" fill="#000" textLength="144.4" lengthAdjust="spacingAndGlyphs">D13,$A$2:$B$4,2,</text>
<text x="1207.9" y="449.5" font-size="18.2" fill="#1a6aab" font-weight="bold" textLength="10.0" lengthAdjust="spacingAndGlyphs">0</text>
<text x="1218.7" y="449.5" font-size="18.2" fill="#000" textLength="5.3" lengthAdjust="spacingAndGlyphs">)</text>
<text x="210.1" y="498.8" font-size="18.2" fill="#000" textLength="54.7" lengthAdjust="spacingAndGlyphs">* HÀM</text>
<text x="269.7" y="498.8" font-size="18.2" fill="#1a6aab" font-weight="bold" textLength="82.9" lengthAdjust="spacingAndGlyphs">VLOOKUP</text>
<text x="358.3" y="498.8" font-size="18.2" fill="#000" textLength="225.1" lengthAdjust="spacingAndGlyphs">LÀ HÀM ĐƯỢC MỌI NGƯỜI</text>
<text x="589.4" y="498.8" font-size="18.2" fill="#000" textLength="174.9" lengthAdjust="spacingAndGlyphs">SỬ DỤNG RẤT NHIỀU</text>
<text x="768.6" y="498.8" font-size="18.2" fill="#000" textLength="171.5" lengthAdjust="spacingAndGlyphs">TRONG CÔNG VIỆC...</text>
<text x="210.1" y="526.8" font-size="18.2" fill="#000" textLength="200.1" lengthAdjust="spacingAndGlyphs">TUY NHIÊN CÓ 1 SỐ BẠN</text>
<text x="415.9" y="526.8" font-size="18.2" fill="#000" textLength="142.3" lengthAdjust="spacingAndGlyphs">KHÔNG HIỂU HẾT</text>
<text x="561.9" y="526.8" font-size="18.2" fill="#000" textLength="153.3" lengthAdjust="spacingAndGlyphs">VỀ CÁCH SỬ DỤNG</text>
<text x="721.4" y="526.8" font-size="18.2" fill="#000" textLength="142.7" lengthAdjust="spacingAndGlyphs">DẪN ĐẾN CÓ KẾT</text>
<text x="870.6" y="526.8" font-size="18.2" fill="#000" textLength="136.3" lengthAdjust="spacingAndGlyphs">QUẢ LÚC ĐÚNG,</text>
<text x="1012.7" y="526.8" font-size="18.2" fill="#d3242a" textLength="63.1" lengthAdjust="spacingAndGlyphs">LÚC SAI</text>
<text x="1081.0" y="526.8" font-size="18.2" fill="#000" textLength="83.4" lengthAdjust="spacingAndGlyphs">KHI DÙNG</text>
<text x="209.0" y="554.8" font-size="18.2" fill="#1a6aab" font-weight="bold" textLength="89.7" lengthAdjust="spacingAndGlyphs">VLOOKUP:</text>
<text x="210.1" y="582.8" font-size="18.2" fill="#1a6aab" font-weight="bold" textLength="217.5" lengthAdjust="spacingAndGlyphs">=VLOOKUP(lookup_value,</text>
<text x="432.1" y="582.8" font-size="18.2" fill="#1a6aab" font-weight="bold" textLength="99.9" lengthAdjust="spacingAndGlyphs">table_array,</text>
<text x="538.1" y="582.8" font-size="18.2" fill="#1a6aab" font-weight="bold" textLength="269.6" lengthAdjust="spacingAndGlyphs">col_index_num,[range_lookup])</text>
<text x="210.1" y="610.8" font-size="18.2" fill="#000" textLength="214.2" lengthAdjust="spacingAndGlyphs">SO SÁNH 2 TRƯỜNG HỢP:</text>
<text x="493.4" y="610.8" font-size="18.2" fill="#000" textLength="135.9" lengthAdjust="spacingAndGlyphs">TRƯỜNG HỢP 1:</text>
<text x="634.2" y="610.8" font-size="18.2" fill="#4f81bd" font-weight="bold" textLength="56.4" lengthAdjust="spacingAndGlyphs">E8:E13</text>
<text x="695.4" y="610.8" font-size="18.2" fill="#000" textLength="116.3" lengthAdjust="spacingAndGlyphs">KHÔNG DÙNG</text>
<text x="816.7" y="610.8" font-size="18.2" fill="#1a6aab" font-weight="bold" textLength="140.9" lengthAdjust="spacingAndGlyphs">RANGE_LOOKUP</text>
<text x="549.3" y="638.8" font-size="18.2" fill="#000" textLength="135.0" lengthAdjust="spacingAndGlyphs">TRƯỜNG HỢP 2:</text>
<text x="690.1" y="638.8" font-size="18.2" fill="#4f81bd" font-weight="bold" textLength="46.3" lengthAdjust="spacingAndGlyphs">I8:I13</text>
<text x="746.3" y="638.8" font-size="18.2" fill="#000" textLength="51.0" lengthAdjust="spacingAndGlyphs">DÙNG</text>
<text x="802.2" y="638.8" font-size="18.2" fill="#1a6aab" font-weight="bold" textLength="159.9" lengthAdjust="spacingAndGlyphs">RANGE_LOOKUP=0</text>
<text x="210.1" y="694.8" font-size="18.2" fill="#000" font-weight="bold" textLength="285.4" lengthAdjust="spacingAndGlyphs">Ở Ô E8 TÍNH ĐÚNG, NHƯNG TỪ Ô</text>
<text x="500.8" y="694.8" font-size="18.2" fill="#e01e24" font-weight="bold" textLength="115.2" lengthAdjust="spacingAndGlyphs">E9,..., E12,E13</text>
<text x="621.8" y="694.8" font-size="18.2" fill="#000" font-weight="bold" textLength="71.7" lengthAdjust="spacingAndGlyphs">TÍNH SAI</text>
<text x="210.1" y="722.8" font-size="18.2" fill="#000" font-weight="bold" textLength="172.0" lengthAdjust="spacingAndGlyphs">CÁCH KHẮC PHỤC ĐỂ</text>
<text x="387.3" y="722.8" font-size="18.2" fill="#000" font-weight="bold" textLength="63.7" lengthAdjust="spacingAndGlyphs">E8:E13</text>
<text x="455.9" y="722.8" font-size="18.2" fill="#000" font-weight="bold" textLength="104.0" lengthAdjust="spacingAndGlyphs">CÓ KẾT QUẢ</text>
<text x="566.1" y="722.8" font-size="18.2" fill="#000" font-weight="bold" textLength="56.2" lengthAdjust="spacingAndGlyphs">ĐÚNG:</text>
<text x="628.8" y="722.8" font-size="18.2" fill="#000" font-weight="bold" textLength="160.8" lengthAdjust="spacingAndGlyphs">BẢNG THAM CHIẾU</text>
<text x="795.3" y="722.8" font-size="18.2" fill="#000" font-weight="bold" textLength="89.9" lengthAdjust="spacingAndGlyphs">$A$2:$B$4</text>
<text x="890.6" y="722.8" font-size="18.2" fill="#000" font-weight="bold" textLength="192.6" lengthAdjust="spacingAndGlyphs">CHÚNG TA THAY BẰNG</text>
<text x="1088.9" y="722.8" font-size="18.2" fill="#000" font-weight="bold" textLength="94.1" lengthAdjust="spacingAndGlyphs">$A$7:$B$9,</text>
<text x="1188.7" y="722.8" font-size="18.2" fill="#000" font-weight="bold" textLength="28.5" lengthAdjust="spacingAndGlyphs">KHI</text>
<text x="210.1" y="750.8" font-size="18.2" fill="#000" font-weight="bold" textLength="288.7" lengthAdjust="spacingAndGlyphs">ĐÓ (CỘT E) SẼ CÓ KẾT QUẢ ĐÚNG.</text>
<text x="210.1" y="778.8" font-size="18.2" fill="#000" font-weight="bold" textLength="139.6" lengthAdjust="spacingAndGlyphs">-&gt; NHƯ VẬY NẾU</text>
<text x="355.4" y="778.8" font-size="18.2" fill="#000" font-weight="bold" textLength="163.1" lengthAdjust="spacingAndGlyphs">BẢNG THAM CHIẾU</text>
<text x="522.8" y="778.8" font-size="18.2" fill="#000" font-weight="bold" textLength="65.1" lengthAdjust="spacingAndGlyphs">(CỘT A)</text>
<text x="592.8" y="778.8" font-size="18.2" fill="#000" font-weight="bold" textLength="192.0" lengthAdjust="spacingAndGlyphs">SẮP XẾP THEO THỨ TỰ</text>
<text x="791.1" y="778.8" font-size="18.2" fill="#000" font-weight="bold" textLength="77.2" lengthAdjust="spacingAndGlyphs">A,B,C,D...</text>
<text x="874.0" y="778.8" font-size="18.2" fill="#000" font-weight="bold" textLength="10.3" lengthAdjust="spacingAndGlyphs">Z</text>
<text x="890.1" y="778.8" font-size="18.2" fill="#000" font-weight="bold" textLength="162.1" lengthAdjust="spacingAndGlyphs">KHI ĐÓ DÙNG HÀM</text>
<text x="1057.1" y="778.8" font-size="18.2" fill="#000" font-weight="bold" textLength="83.7" lengthAdjust="spacingAndGlyphs">VLOOKUP</text>
<text x="1146.0" y="778.8" font-size="18.2" fill="#000" font-weight="bold" textLength="89.6" lengthAdjust="spacingAndGlyphs">SẼ KHÔNG</text>
<text x="210.1" y="806.8" font-size="18.2" fill="#000" font-weight="bold" textLength="92.0" lengthAdjust="spacingAndGlyphs">CẦN DÙNG</text>
<text x="307.9" y="806.8" font-size="18.2" fill="#1a6aab" font-weight="bold" textLength="128.8" lengthAdjust="spacingAndGlyphs">[range_lookup]</text>
<text x="210.8" y="873.8" font-size="27.2" fill="#000" font-weight="bold" textLength="396.2" lengthAdjust="spacingAndGlyphs">KẾT LUẬN: CÁC BẠN NÊN DÙNG</text>
<text x="615.5" y="873.8" font-size="27.2" fill="#2aa6b9" font-weight="bold" textLength="239.0" lengthAdjust="spacingAndGlyphs">RANGE_LOOKUP=0</text>
<text x="860.8" y="873.8" font-size="27.2" fill="#000" font-weight="bold" textLength="380.0" lengthAdjust="spacingAndGlyphs">ĐỂ KẾT QUẢ LUÔN ĐÚNG (KẾT</text>
<text x="210.8" y="912.3" font-size="27.2" fill="#000" font-weight="bold" textLength="453.8" lengthAdjust="spacingAndGlyphs">QUẢ KHÔNG PHỤ THUỘC VÀO CÁCH</text>
<text x="672.6" y="912.3" font-size="27.2" fill="#000" font-weight="bold" textLength="425.6" lengthAdjust="spacingAndGlyphs">SẮP XẾP CỦA BẢNG THAM CHIẾU)</text>
</g>
<g id="vscroll" shape-rendering="crispEdges">
<rect x="1260" y="94" width="16" height="852" fill="#e4e7eb" />
<rect x="1276" y="94" width="4" height="868" fill="#e3e6ea" />
<rect x="1260" y="121" width="1" height="825" fill="#c9ccd2" />
<rect x="1276" y="94" width="1" height="868" fill="#b8bcc3" />
<rect x="1261" y="95" width="15" height="8" fill="#ffffff" stroke="#9da1a9" stroke-width="1"/>
<rect x="1265" y="98" width="8" height="1" fill="#8b8f97" />
<rect x="1261" y="121" width="14" height="780" fill="url(#gThumbV)" />
<rect x="1261.5" y="121.5" width="13" height="779" fill="none" stroke="#a9adb5" stroke-width="1"/>
<rect x="1264" y="507" width="8" height="1" fill="#7b8089" />
<rect x="1264" y="509" width="8" height="1" fill="#7b8089" />
<rect x="1264" y="511" width="8" height="1" fill="#7b8089" />
<rect x="1264" y="513" width="8" height="1" fill="#7b8089" />
</g>
<path d="M1263 114 h9 l-4.5 -5 z" fill="#3b3f46"/>
<path d="M1263 935 h9.5 l-4.75 5.5 z" fill="#3b3f46"/>
<g id="tabbar" shape-rendering="crispEdges">
<rect x="0" y="946" width="1276" height="16" fill="#dfe3e8" />
<rect x="0" y="946" width="1276" height="1" fill="#a3a8b0" />
</g>
<g id="sheettabs">
<path d="M240.5 961.5 L248 946.5 H285.5 L274.5 961.5 Z" fill="#e8ebef" stroke="#9da1a9" stroke-width="1"/>
<path d="M180 961.5 L189.5 946.5 H248 L240.5 961.5 Z" fill="#e8ebef" stroke="#9da1a9" stroke-width="1"/>
<path d="M119.5 961.5 L131.5 946.5 H189.5 L180 961.5 Z" fill="#e8ebef" stroke="#9da1a9" stroke-width="1"/>
<path d="M63 946 V961.5 H119.5 L131.5 946 Z" fill="#ffffff"/>
<path d="M62.5 946 V961.5 M119.5 961.5 L131.5 946.5" fill="none" stroke="#9da1a9" stroke-width="1"/>
<rect x="63" y="946" width="68" height="1" fill="#ffffff" />
<text x="72" y="959" font-size="12" fill="#3a3d42" font-weight="bold" textLength="43" lengthAdjust="spacingAndGlyphs">Sheet1</text>
<text x="134" y="959" font-size="12" fill="#4a4d52" textLength="39" lengthAdjust="spacingAndGlyphs">Sheet2</text>
<text x="194.5" y="959" font-size="12" fill="#4a4d52" textLength="39.2" lengthAdjust="spacingAndGlyphs">Sheet3</text>
<g fill="#3b3f46">
<rect x="5.5" y="949.5" width="1.3" height="8"/><path d="M12.5 949.5 v8 l-5 -4 z"/>
<path d="M26 949.5 v8 l-5 -4 z"/>
<path d="M35.5 949.5 v8 l5 -4 z"/>
<path d="M49.5 949.5 v8 l5 -4 z"/><rect x="55" y="949.5" width="1.3" height="8"/>
</g>
<rect x="257" y="950" width="10" height="8" rx="1" fill="#f4f6fa" stroke="#5b6f94" stroke-width="1"/>
<path d="M256.5 947 v6 M253.5 950 h6 M254.4 947.9 l4.2 4.2 M258.6 947.9 l-4.2 4.2" stroke="#e3a21a" stroke-width="1"/>
</g>
<g id="hscroll">
<rect x="757" y="947" width="503" height="15" fill="#e4e7eb" shape-rendering="crispEdges"/>
<rect x="756.5" y="947.5" width="7" height="14" fill="#ffffff" stroke="#8b8f97" stroke-width="1"/>
<rect x="759.5" y="950.5" width="1" height="8" fill="#555" />
<path d="M774.5 949.5 v9 l-5.5 -4.5 z" fill="#3b3f46"/>
<rect x="782.5" y="947.5" width="406" height="14" rx="1.5" fill="url(#gThumbH)" stroke="#a9adb5" stroke-width="1"/>
<rect x="981" y="951" width="1" height="7" fill="#8b8f97" />
<rect x="983" y="951" width="1" height="7" fill="#8b8f97" />
<rect x="985" y="951" width="1" height="7" fill="#8b8f97" />
<rect x="987" y="951" width="1" height="7" fill="#8b8f97" />
<path d="M1241.5 949.5 v9 l5.5 -4.5 z" fill="#3b3f46"/>
<rect x="1252.5" y="947.5" width="6.5" height="14" fill="#ffffff" stroke="#8b8f97" stroke-width="1"/>
<rect x="1255.3" y="950.5" width="1" height="8" fill="#555" />
<rect x="1260" y="946" width="16" height="16" fill="#e4e7eb" shape-rendering="crispEdges"/>
</g>
<g id="statusbar">
<rect x="0" y="962" width="1280" height="22" fill="url(#gStatus)" shape-rendering="crispEdges"/>
<rect x="0" y="962" width="1280" height="1" fill="#8f939b" shape-rendering="crispEdges"/>
<rect x="0" y="963" width="1280" height="1" fill="#f1f2f5" shape-rendering="crispEdges"/>
<rect x="0" y="984" width="1280" height="1" fill="#46515f" shape-rendering="crispEdges"/>
<text x="8.5" y="977" font-size="11.6" fill="#3a3d42" textLength="30.5" lengthAdjust="spacingAndGlyphs">Ready</text>
<rect x="48" y="964" width="1" height="18" fill="#a9adb5" shape-rendering="crispEdges"/>
<rect x="49" y="964" width="1" height="18" fill="#f1f2f4" shape-rendering="crispEdges"/>
<rect x="1038" y="964" width="1" height="18" fill="#a9adb5" shape-rendering="crispEdges"/>
<rect x="1039" y="964" width="1" height="18" fill="#f1f2f4" shape-rendering="crispEdges"/>
<rect x="1043.5" y="964.5" width="18" height="17" rx="2" fill="#ffd45c" stroke="#e3a21a" stroke-width="1"/>
<rect x="1046.5" y="967.5" width="12" height="10" fill="#ffffff" stroke="#6b6f78" stroke-width="1"/>
<path d="M1046.5 971 h12 M1046.5 974.3 h12 M1050.5 967.5 v10 M1054.5 967.5 v10" stroke="#6b6f78" stroke-width="1" fill="none"/>
<rect x="1065.5" y="967.5" width="12" height="11" fill="#d9dce1" stroke="#6b6f78" stroke-width="1"/>
<rect x="1068.5" y="970.5" width="6" height="6" fill="#ffffff" stroke="#8b8f97" stroke-width="1"/>
<rect x="1083.5" y="967.5" width="13" height="11" fill="#b9bdc4" stroke="#6b6f78" stroke-width="1"/>
<path d="M1084 968 h7 v6 h-7 z" fill="#ffffff"/><path d="M1087.5 968 v6" stroke="#6b6f78"/>
<text x="1108.8" y="977" font-size="11.6" fill="#3a3d42" textLength="26.7" lengthAdjust="spacingAndGlyphs">139%</text>
<circle cx="1152" cy="972.5" r="7.5" fill="#f4f5f7" stroke="#8b8f97" stroke-width="1"/>
<rect x="1147.5" y="971.5" width="9" height="2" fill="#3b3f46" />
<rect x="1160" y="972" width="99" height="1" fill="#8b8f97" shape-rendering="crispEdges"/>
<rect x="1160" y="973" width="99" height="1" fill="#f4f5f7" shape-rendering="crispEdges"/>
<rect x="1209" y="968" width="1" height="9" fill="#8b8f97" shape-rendering="crispEdges"/>
<path d="M1211.5 966.5 h8 v8 l-4 4 l-4 -4 z" fill="#eef0f3" stroke="#7b8089" stroke-width="1"/>
<circle cx="1267.5" cy="972.5" r="7.5" fill="#f4f5f7" stroke="#8b8f97" stroke-width="1"/>
<rect x="1263" y="971.5" width="9" height="2" fill="#3b3f46" />
<rect x="1266.5" y="968" width="2" height="9" fill="#3b3f46" />
</g>
<g id="taskbar">
<rect x="0" y="985" width="1280" height="7" fill="url(#gTask)" shape-rendering="crispEdges"/>
<rect x="0" y="985" width="1280" height="7" fill="url(#gTaskX)" shape-rendering="crispEdges"/>
<rect x="0" y="985" width="1280" height="1" fill="#c3d3e6" shape-rendering="crispEdges" opacity="0.55"/>
<path d="M121.5 992 V989 Q121.5 986 124 986 H172 Q174.5 986 174.5 989 V992 Z" fill="#d3dfee" stroke="#3f4f66" stroke-width="1"/>
<path d="M122.5 992 V989 Q122.5 987 124.5 987 H171.5 Q173.5 987 173.5 989 V992" fill="none" stroke="#f4f8fc" stroke-width="1"/>
<path d="M184.5 992 V989 Q184.5 986 187 986 H239 Q241.5 986 241.5 989 V992 Z" fill="#d3dfee" stroke="#3f4f66" stroke-width="1"/>
<path d="M185.5 992 V989 Q185.5 987 187.5 987 H238.5 Q240.5 987 240.5 989 V992" fill="none" stroke="#f4f8fc" stroke-width="1"/>
<path d="M246.5 992 V989 Q246.5 986 249 986 H301 Q303.5 986 303.5 989 V992 Z" fill="#d3dfee" stroke="#3f4f66" stroke-width="1"/>
<path d="M247.5 992 V989 Q247.5 987 249.5 987 H300.5 Q302.5 987 302.5 989 V992" fill="none" stroke="#f4f8fc" stroke-width="1"/>
<path d="M369.5 992 V989 Q369.5 986 372 986 H425 Q427.5 986 427.5 989 V992 Z" fill="#d3dfee" stroke="#3f4f66" stroke-width="1"/>
<path d="M370.5 992 V989 Q370.5 987 372.5 987 H424.5 Q426.5 987 426.5 989 V992" fill="none" stroke="#f4f8fc" stroke-width="1"/>
<path d="M431.5 992 V989 Q431.5 986 434 986 H487 Q489.5 986 489.5 989 V992 Z" fill="#d3dfee" stroke="#3f4f66" stroke-width="1"/>
<path d="M432.5 992 V989 Q432.5 987 434.5 987 H486.5 Q488.5 987 488.5 989 V992" fill="none" stroke="#f4f8fc" stroke-width="1"/>
<path d="M493.5 992 V989 Q493.5 986 496 986 H548 Q550.5 986 550.5 989 V992 Z" fill="#d3dfee" stroke="#3f4f66" stroke-width="1"/>
<path d="M494.5 992 V989 Q494.5 987 496.5 987 H547.5 Q549.5 987 549.5 989 V992" fill="none" stroke="#f4f8fc" stroke-width="1"/>
<path d="M555.5 992 V989 Q555.5 986 558 986 H611 Q613.5 986 613.5 989 V992 Z" fill="#edf2f8" stroke="#3f4f66" stroke-width="1"/>
<path d="M556.5 992 V989 Q556.5 987 558.5 987 H610.5 Q612.5 987 612.5 989 V992" fill="none" stroke="#f4f8fc" stroke-width="1"/>
<circle cx="26.5" cy="1004" r="18" fill="#7f9dc3" stroke="#d9e4f1" stroke-width="1.2"/>
<path d="M88 992 q6 -6 12 -4 v4 z" fill="#f3c61c"/>
<path d="M268 992 q7 -5 14 0 z" fill="#e0413a"/>
<path d="M330 992 l4 -4 l4 2 l3 -2 v4 z" fill="#f2d21f"/>
<path d="M383 992 q8 -6 20 -2 v2 z" fill="#23a7e6"/>
<path d="M508 992 v-3 h18 v3" fill="#dbe5f1" stroke="#51607a" stroke-width="1"/>
<path d="M571 992 q2 -4 7 -4 h14 v4 z" fill="#bfe0a8" stroke="#3f7a3c" stroke-width="1"/>
<rect x="1266" y="985" width="14" height="7" fill="#7f8da0" />
<rect x="1266" y="985" width="1" height="7" fill="#3f4f66" />
</g>
<g id="qat">
<!-- excel app icon -->
<rect x="1.5" y="3.5" width="15" height="15" rx="1" fill="#f4faf2" stroke="#2d5a33" stroke-width="1.2"/>
<path d="M4.2 6 L8.2 6 L13.8 16 L9.8 16 Z" fill="#2e7d32"/>
<path d="M13.8 6 L9.8 6 L4.2 16 L8.2 16 Z" fill="#7cbf4a"/>
<rect x="21" y="5" width="1" height="13" fill="#9a9ea6" shape-rendering="crispEdges"/>
<!-- save -->
<rect x="29.5" y="4.5" width="13" height="13" rx="1" fill="#4b4db0" stroke="#33358a" stroke-width="1"/>
<rect x="32" y="5" width="8" height="5.5" fill="#f2f3fb"/>
<rect x="33" y="12.5" width="6.5" height="5" fill="#23234f"/>
<rect x="36.5" y="13.5" width="2.5" height="3.5" fill="#e9eaf6"/>
<!-- undo (disabled) -->
<path d="M52 5.5 V11.5 H58 L56 9.5 Q61 8.5 60.5 12 Q60 14.5 58 16 Q64.5 13.5 63.5 9 Q62 4.5 54.5 7.5 Z" fill="#b3b6bb"/>
<path d="M70.2 9.2 h5 l-2.5 2.8 z" fill="#b3b6bb"/>
<!-- redo (disabled) -->
<path d="M95 5.5 V11.5 H89 L91 9.5 Q86 8.5 86.5 12 Q87 14.5 89 16 Q82.5 13.5 83.5 9 Q85 4.5 92.5 7.5 Z" fill="#b3b6bb"/>
<path d="M101.8 9.2 h5 l-2.5 2.8 z" fill="#b3b6bb"/>
<!-- quick print -->
<rect x="119.5" y="3.5" width="5" height="5" fill="#ffffff" stroke="#7b8089" stroke-width="0.8"/>
<rect x="114.5" y="8" width="15.5" height="7.5" rx="1.5" fill="#a4a9b3" stroke="#6f747d" stroke-width="1"/>
<rect x="115" y="10.3" width="14.5" height="1.5" fill="#d9dce2"/>
<rect x="119.5" y="13" width="5.5" height="5.5" fill="#ffffff" stroke="#5e636c" stroke-width="0.9"/>
<circle cx="126.3" cy="6.3" r="3.1" fill="#3fae3a" stroke="#2a7f2a" stroke-width="0.6"/>
<path d="M124.7 6.3 l1.2 1.3 l2.1 -2.6" fill="none" stroke="#fff" stroke-width="1.1"/>
<!-- print preview -->
<path d="M137.8 4.5 H145 L148 7.5 V17.5 H137.8 Z" fill="#fbfcfe" stroke="#70757f" stroke-width="1"/>
<path d="M145 4.5 V7.5 H148" fill="#dfe3ea" stroke="#70757f" stroke-width="0.8"/>
<path d="M147 14 L151.3 17.8" stroke="#c48a3a" stroke-width="2.2" stroke-linecap="round"/>
<circle cx="144.4" cy="11.5" r="3.6" fill="#eef3f8" fill-opacity="0.85" stroke="#7d838d" stroke-width="1.1"/>
<!-- new -->
<path d="M160.5 4.5 H167.5 L170.7 7.7 V17.5 H160.5 Z" fill="#fbfcfe" stroke="#70757f" stroke-width="1"/>
<path d="M167.5 4.5 V7.7 H170.7" fill="#dfe3ea" stroke="#70757f" stroke-width="0.8"/>
<rect x="180" y="5" width="1" height="13" fill="#9a9ea6" shape-rendering="crispEdges"/>
<!-- customize -->
<rect x="185" y="8.7" width="7" height="1.5" fill="#1f2227"/>
<path d="M185 11.6 h7 l-3.5 3.4 z" fill="#1f2227"/>
</g>
<g id="winbtns" fill="#ffffff" stroke="#3f434a" stroke-width="1.3" stroke-linejoin="round">
<!-- top row -->
<rect x="1187.6" y="10.3" width="10.2" height="4.4" rx="1.2"/>
<rect x="1225.6" y="5.6" width="6.8" height="6.4" rx="0.8"/>
<rect x="1221.6" y="8.8" width="6.8" height="6.6" rx="0.8"/>
<rect x="1223.8" y="11.4" width="2.4" height="1.8" stroke-width="1"/>
<rect x="1228.4" y="7.6" width="1.8" height="1.4" stroke-width="0.9"/>
<!-- second row -->
<rect x="1220.6" y="35" width="10" height="4" rx="1.2"/>
<rect x="1245.6" y="30.8" width="6.8" height="6.2" rx="0.8"/>
<rect x="1241.6" y="34" width="6.8" height="6.4" rx="0.8"/>
<rect x="1243.8" y="36.4" width="2.4" height="1.8" stroke-width="1"/>
<rect x="1248.4" y="32.8" width="1.8" height="1.4" stroke-width="0.9"/>
</g>
<g id="closex" fill="none" stroke-linecap="butt">
<path d="M1258.2 6.8 L1266.8 14.6 M1266.8 6.8 L1258.2 14.6" stroke="#3f434a" stroke-width="4.2"/>
<path d="M1258.8 7.3 L1266.2 14.1 M1266.2 7.3 L1258.8 14.1" stroke="#ffffff" stroke-width="1.7"/>
<path d="M1265.2 30.8 L1273.8 38.6 M1273.8 30.8 L1265.2 38.6" stroke="#3f434a" stroke-width="4.2"/>
<path d="M1265.8 31.3 L1273.2 38.1 M1273.2 31.3 L1265.8 38.1" stroke="#ffffff" stroke-width="1.7"/>
</g>
<g id="helpbtn">
<path d="M1177.4 33.6 Q1177.4 32.2 1178.9 32.2 Q1180.5 32.2 1181.7 34 Q1182.9 32.2 1184.5 32.2 Q1186 32.2 1186 33.6 Q1186 35.2 1181.7 38.8 Q1177.4 35.2 1177.4 33.6 Z" fill="#ffffff" stroke="#3f434a" stroke-width="1.2" stroke-linejoin="round"/>
<circle cx="1203" cy="34.8" r="7.7" fill="url(#gHelp)" stroke="#2a56a3" stroke-width="0.8"/>
<text x="1203" y="39.3" font-size="12.5" font-weight="bold" fill="#ffffff" text-anchor="middle">?</text>
</g>

</svg>
</body>
</html>
